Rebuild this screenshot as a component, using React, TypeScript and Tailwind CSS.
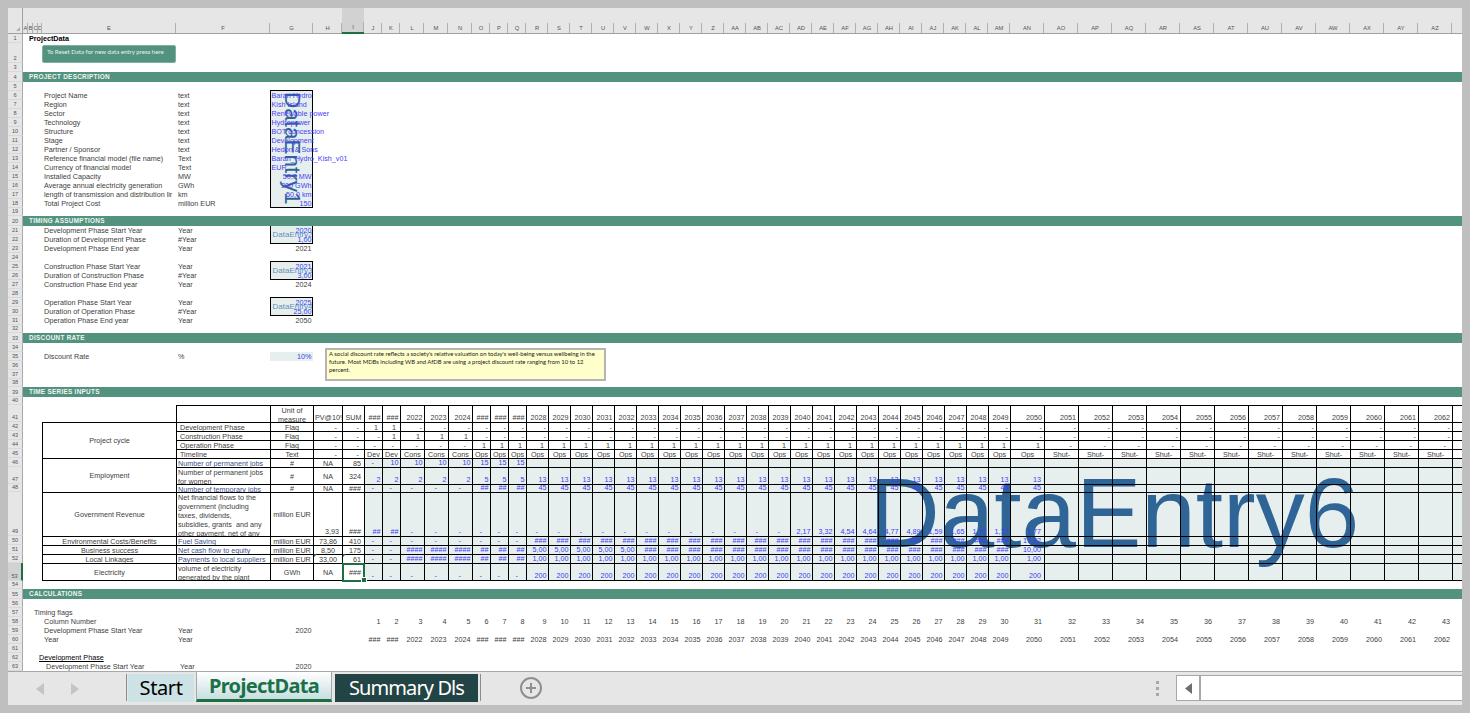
import React from "react"

const colWidths = [15, 5, 5, 5, 4, 134, 94, 43, 29, 22, 18, 18, 24, 24, 24, 18, 18, 18, ...Array(22).fill(22), ...Array(14).fill(34)]
const rowHeights = [
  26, 9, 20, 9, 10, 8.5, 9, 9, 9, 9, 9, 9, 9, 9, 9, 9, 9, 9, 9, 8.5, 10, 9, 9, 9, 9, 9, 9, 9, 9, 9, 9, 9, 8, 10, 9, 9, 9, 9, 8, 10, 8, 17, 9, 9, 9, 9, 9, 17, 8,
  44, 9, 9, 9, 18, 8, 10, 9, 9, 9, 9, 9, 9, 9, 9,
]
const colNames = ["A", "B", "C", "D", "E", "F", "G", "H", "I", "J", "K", "L", "M", "N", "O", "P", "Q", "R", "S", "T", "U", "V", "W", "X", "Y", "Z", "AA", "AB", "AC", "AD", "AE", "AF", "AG", "AH", "AI", "AJ", "AK", "AL", "AM", "AN", "AO", "AP", "AQ", "AR", "AS", "AT", "AU", "AV", "AW", "AX", "AY", "AZ", ""]

const ink = "text-[#404040]"
const blue = "text-[#3b3bf5]"

type CellProps = { c: number; r: number; cs?: number; rs?: number; className?: string; children?: React.ReactNode }

const Cell = ({ c, r, cs = 1, rs = 1, className = "", children }: CellProps) => (
  <div className={className} style={{ gridColumn: `${c + 1} / span ${cs}`, gridRow: `${r + 1} / span ${rs}` }}>
    {children}
  </div>
)

// plain text in a sheet cell, spills over its neighbours like excel does
const Txt = ({ c, r, x = 0, className = "", color = ink, children }: { c: number; r: number; x?: number; className?: string; color?: string; children: React.ReactNode }) => (
  <Cell c={c} r={r} className={`z-[2] whitespace-nowrap ${color} ${className}`}>
    <span style={{ marginLeft: x }}>{children}</span>
  </Cell>
)

const Num = ({ c, r, className = "", children }: { c: number; r: number; className?: string; children: React.ReactNode }) => (
  <Cell c={c} r={r} className={`z-[2] text-right whitespace-nowrap ${c >= 40 ? "pr-[2px]" : "pr-[1.5px]"} ${className}`}>
    {children}
  </Cell>
)

const Band = ({ r, title }: { r: number; title: string }) => (
  <Cell c={1} r={r} cs={53} className="z-[2] bg-[#52927f] pl-[6px] font-bold text-[6.4px] leading-[10px] tracking-[0.28px] text-[#eef5f2]">
    {title}
  </Cell>
)

const description = [
  ["Project Name", "text", "Baran Hydro"],
  ["Region", "text", "Kish Island"],
  ["Sector", "text", "Renewable power"],
  ["Technology", "text", "Hydropower"],
  ["Structure", "text", "BOT concession"],
  ["Stage", "text", "Development"],
  ["Partner / Sponsor", "text", "Hedon & Sons"],
  ["Reference financial model (file name)", "Text", "Baran_Hydro_Kish_v01"],
  ["Currency of financial model", "Text", "EUR"],
  ["Installed Capacity", "MW", "50,0 MW"],
  ["Average annual electricity generation", "GWh", "200 GWh"],
  ["length of transmission and distribution lir", "km", "50,0 km"],
  ["Total Project Cost", "million EUR", "150"],
]

const timing = [
  { r: 21, name: "Development", label: "DataEntry2", a: "2020", b: "1,00", end: "2021", endWord: "Development Phase End year" },
  { r: 25, name: "Construction", label: "DataEntry3", a: "2021", b: "3,00", end: "2024", endWord: "Construction Phase End year" },
  { r: 29, name: "Operation", label: "DataEntry4", a: "2025", b: "25,00", end: "2050", endWord: "Operation Phase End year" },
]

const yearLabel = (c: number) => (c === 10 || c === 11 || c === 15 || c === 16 || c === 17 ? "###" : String(2010 + c))

const govValues: Record<number, string> = { 30: "2,17", 31: "3,32", 32: "4,54", 33: "4,64", 34: "4,77", 35: "4,89", 36: "1,59", 37: "1,65", 38: "1,72", 39: "1,77", 40: "1,77" }

const blackRow = (r: number, c: number) => {
  if (r === 42) return c <= 11 ? "1" : "-"
  if (r === 43) return c >= 11 && c <= 14 ? "1" : "-"
  return c >= 15 && c <= 40 ? "1" : "-"
}
const timeline = (c: number) => (c <= 11 ? "Dev" : c <= 14 ? "Cons" : c <= 40 ? "Ops" : "Shut-")

const blueRow = (r: number, c: number) => {
  if (r === 46) return c === 10 ? "-" : c <= 14 ? "10" : c <= 17 ? "15" : ""
  if (r === 47) return c <= 14 ? "2" : c <= 17 ? "5" : c <= 40 ? "13" : ""
  if (r === 48) return c <= 14 ? "-" : c <= 17 ? "##" : c <= 40 ? "45" : ""
  if (r === 49) return c <= 11 ? "##" : c <= 29 ? "-" : govValues[c] ?? ""
  if (r === 50) return c <= 17 ? "-" : c <= 39 ? "###" : c === 40 ? "17,82" : ""
  if (r === 51) return c <= 11 ? "-" : c <= 14 ? "####" : c <= 17 ? "##" : c <= 22 ? "5,00" : c <= 39 ? "###" : c === 40 ? "10,00" : ""
  if (r === 52) return c <= 11 ? "-" : c <= 14 ? "####" : c <= 17 ? "##" : c <= 40 ? "1,00" : ""
  return c <= 17 ? "-" : c <= 40 ? "200" : ""
}

const tableLabels = [
  { r: 42, rs: 4, text: "Project cycle" },
  { r: 46, rs: 3, text: "Employment" },
  { r: 49, rs: 1, text: "Government Revenue" },
  { r: 50, rs: 1, text: "Environmental Costs/Benefits" },
  { r: 51, rs: 1, text: "Business success" },
  { r: 52, rs: 1, text: "Local Linkages" },
  { r: 53, rs: 1, text: "Electricity" },
]

const tableDesc: Record<number, [string, string, string, string]> = {
  42: ["Development Phase", "Flag", "-", "-"],
  43: ["Construction Phase", "Flag", "-", "-"],
  44: ["Operation Phase", "Flag", "-", "-"],
  45: ["Timeline", "Text", "-", "-"],
  46: ["Number of permanent jobs", "#", "NA", "85"],
  47: ["Number of permanent jobs\nfor women", "#", "NA", "324"],
  48: ["Number of temporary jobs", "#", "NA", "###"],
  49: ["Net financial flows to the\ngovernment (including\ntaxes, dividends,\nsubsidies, grants  and any\nother payment, net of any", "million EUR", "3,93", "###"],
  50: ["Fuel Saving", "million EUR", "73,86", "410"],
  51: ["Net cash flow to equity", "million EUR", "8,50", "175"],
  52: ["Payments to local suppliers", "million EUR", "33,00", "61"],
  53: ["volume of electricity\ngenerated by the plant", "GWh", "NA", "###"],
}

const line = "border-l border-t border-black"
const tableRows = [42, 43, 44, 45, 46, 47, 48, 49, 50, 51, 52, 53]
const seriesCols = Array.from({ length: 44 }, (_, i) => i + 10)

// padding of the flag rows: accounting format keeps ones and row 44 dashes further in
const flagPad = (r: number, v: string) => (v === "1" ? "pr-[4px]" : r === 44 ? "pr-[6px]" : "pr-[2px]")

const Sheet = () => (
  <div
    className="grid flex-1 min-h-0 overflow-hidden bg-white text-[7.2px] leading-[9px] font-['Liberation_Sans',Arial,sans-serif]"
    style={{ gridTemplateColumns: colWidths.map((w) => `${w}px`).join(" "), gridTemplateRows: rowHeights.map((h) => `${h}px`).join(" ") }}>
    {/* headers */}
    <Cell c={0} r={0} className="relative bg-[#e6e6e6] border-b border-r border-[#a0a0a0]">
      <div className="absolute right-[2px] bottom-[2px] h-0 w-0 border-l-[4px] border-l-transparent border-b-[4px] border-b-[#b0b0b0]" />
    </Cell>
    {colNames.map((name, i) => (
      <Cell
        key={i}
        c={i + 1}
        r={0}
        className={`relative flex items-end justify-center pb-[1px] text-[5.8px] leading-[8px] text-[#555] after:absolute after:right-0 after:bottom-0 after:h-[10px] after:w-px after:bg-[#b0b0b0] ${
          name === "I" ? "bg-[#d2d2d2] border-b-2 border-[#1d6f42]" : "bg-[#e6e6e6] border-b border-[#a0a0a0]"
        }`}>
        {name}
      </Cell>
    ))}
    {rowHeights.slice(1).map((_, i) => (
      <Cell
        key={i}
        c={0}
        r={i + 1}
        className={`flex items-end justify-center border-b border-[#d9d9d9] text-[5.6px] leading-[8px] text-[#555] ${
          i + 1 === 53 ? "bg-[#d2d2d2] border-r-2 border-r-[#1d6f42]" : "bg-[#e6e6e6] border-r border-r-[#a8a8a8]"
        }`}>
        {i + 1}
      </Cell>
    ))}

    <Txt c={1} r={1} x={6} color="text-black" className="font-bold">ProjectData</Txt>
    <Band r={4} title="PROJECT DESCRIPTION" />
    <Band r={20} title="TIMING ASSUMPTIONS" />
    <Band r={33} title="DISCOUNT RATE" />
    <Band r={39} title="TIME SERIES INPUTS" />
    <Band r={55} title="CALCULATIONS" />

    {/* project description */}
    <Cell c={7} r={6} rs={13} className="z-[1] mt-[-0.5px] border-[1.5px] border-black bg-[#e6efee]">
      <div className="flex h-full items-center justify-center pl-[9px] text-[22.5px] leading-none text-[#2f6497] [writing-mode:vertical-rl]">DataEntry1</div>
    </Cell>
    {description.map(([label, unit, value], i) => (
      <React.Fragment key={label}>
        <Txt c={5} r={6 + i} x={2}>{label}</Txt>
        <Txt c={6} r={6 + i} x={2}>{unit}</Txt>
        {i < 9 ? (
          <Txt c={7} r={6 + i} x={1.5} color="text-[#4a3df5]">{value}</Txt>
        ) : (
          <Num c={7} r={6 + i} className="text-[#4a3df5]">{value}</Num>
        )}
      </React.Fragment>
    ))}

    {/* timing */}
    {timing.map((t) => (
      <React.Fragment key={t.name}>
        <Cell c={7} r={t.r} rs={2} className="z-[1] mt-[-1px] flex items-center whitespace-nowrap border-[1.5px] border-black bg-[#e6efee] pl-[1.5px] text-[8px] text-[#5f8fb6]">
          {t.label}
        </Cell>
        <Txt c={5} r={t.r} x={2}>{t.name} Phase Start Year</Txt>
        <Txt c={6} r={t.r} x={2}>Year</Txt>
        <Num c={7} r={t.r} className={blue}>{t.a}</Num>
        <Txt c={5} r={t.r + 1} x={2}>Duration of {t.name} Phase</Txt>
        <Txt c={6} r={t.r + 1} x={2}>#Year</Txt>
        <Num c={7} r={t.r + 1} className={blue}>{t.b}</Num>
        <Txt c={5} r={t.r + 2} x={2}>{t.endWord}</Txt>
        <Txt c={6} r={t.r + 2} x={2}>Year</Txt>
        <Num c={7} r={t.r + 2} className={ink}>{t.end}</Num>
      </React.Fragment>
    ))}

    {/* discount */}
    <Txt c={5} r={35} x={2}>Discount Rate</Txt>
    <Txt c={6} r={35} x={2}>%</Txt>
    <Num c={7} r={35} className={`bg-[#e6efee] ${blue}`}>10%</Num>

    {/* time series table */}
    <Cell c={10} r={46} cs={44} rs={8} className="z-0 bg-[#e6efee]" />
    <Cell c={6} r={41} className={`z-[2] ${line}`} />
    <Cell c={7} r={41} className={`z-[2] overflow-hidden text-center ${line} ${ink}`}>
      Unit of
      <br />
      measure
    </Cell>
    <Cell c={8} r={41} className={`z-[2] flex items-end overflow-hidden whitespace-nowrap pl-[1px] ${line} ${ink}`}>PV@10%</Cell>
    <Cell c={9} r={41} className={`z-[2] flex items-end justify-center ${line} ${ink}`}>SUM</Cell>
    {seriesCols.map((c) => (
      <Cell key={c} c={c} r={41} className={`z-[2] flex items-end justify-end ${c >= 40 ? "pr-[2px]" : "pr-[1.5px]"} ${line} ${ink}`}>
        {c < 53 ? yearLabel(c) : ""}
      </Cell>
    ))}
    {tableLabels.map((l) => (
      <Cell key={l.r} c={5} r={l.r} rs={l.rs} className={`z-[2] flex items-center justify-center whitespace-nowrap ${line} ${ink} ${l.r === 53 ? "border-b" : ""}`}>
        {l.text}
      </Cell>
    ))}
    {tableRows.map((r) => {
      const [desc, unit, pv, sum] = tableDesc[r]
      const edge = r === 53 ? "border-b" : ""
      const tall = r === 47 || r === 49 || r === 53
      return (
        <React.Fragment key={r}>
          <Cell c={6} r={r} className={`z-[2] overflow-hidden whitespace-pre ${r <= 45 ? "pl-[3px]" : "pl-[1px]"} ${line} ${edge} ${r >= 46 && !tall ? "text-[#3c4f8c]" : ink}`}>
            {desc}
          </Cell>
          <Cell c={7} r={r} className={`z-[2] flex items-center justify-center whitespace-nowrap ${line} ${edge} ${ink}`}>{unit}</Cell>
          <Cell c={8} r={r} className={`z-[2] flex ${r === 49 ? "items-end justify-end pr-[3px]" : pv === "-" ? "justify-end pr-[5px]" : "items-center justify-center"} ${line} ${edge} ${ink}`}>{pv}</Cell>
          <Cell c={9} r={r} className={`z-[2] flex ${r === 49 ? "items-end justify-end pr-[3px]" : sum === "-" ? "justify-end pr-[5px]" : "items-center justify-end pr-[3px]"} ${line} ${edge} ${ink}`}>{sum}</Cell>
          {seriesCols.map((c) => {
            if (r <= 44) {
              const v = c < 53 ? blackRow(r, c) : ""
              return (
                <Cell key={c} c={c} r={r} className={`z-[2] text-right ${flagPad(r, v)} ${line} ${ink}`}>
                  {v}
                </Cell>
              )
            }
            if (r === 45) {
              return (
                <Cell key={c} c={c} r={r} className={`z-[2] text-center ${line} ${ink}`}>
                  {c < 53 ? timeline(c) : ""}
                </Cell>
              )
            }
            const v = c < 53 ? blueRow(r, c) : ""
            return (
              <Cell key={c} c={c} r={r} className={`z-[2] flex items-end ${v === "-" ? "justify-center" : "justify-end"} ${c >= 40 ? "pr-[3px]" : "pr-[1.5px]"} ${line} ${edge} ${blue}`}>
                {v}
              </Cell>
            )
          })}
        </React.Fragment>
      )
    })}

    {/* calculations */}
    <Txt c={5} r={57} x={-8}>Timing flags</Txt>
    <Txt c={5} r={58} x={2}>Column Number</Txt>
    <Txt c={5} r={59} x={2}>Development Phase Start Year</Txt>
    <Txt c={6} r={59} x={2}>Year</Txt>
    <Num c={7} r={59} className={ink}>2020</Num>
    <Txt c={5} r={60} x={2}>Year</Txt>
    <Txt c={6} r={60} x={2}>Year</Txt>
    {seriesCols.filter((c) => c < 53).map((c) => (
      <React.Fragment key={c}>
        <Num c={c} r={58} className={ink}>{c - 9}</Num>
        <Num c={c} r={60} className={ink}>{yearLabel(c)}</Num>
      </React.Fragment>
    ))}
    <Txt c={5} r={62} x={-3} color="text-black" className="underline">Development Phase</Txt>
    <Txt c={5} r={63} x={4}>Development Phase Start Year</Txt>
    <Txt c={6} r={63} x={4}>Year</Txt>
    <Num c={7} r={63} className={ink}>2020</Num>
  </div>
)

const Tabs = () => (
  <div className="flex h-[34px] shrink-0 border-t border-[#a8a8a8] bg-[#e6e6e6]">
    <div className="flex w-[118px] items-center gap-[27px] pl-[28px]">
      <svg width="8" height="12" viewBox="0 0 8 12"><path d="M8 0v12L0 6z" fill="#c4c4c4" /></svg>
      <svg width="8" height="12" viewBox="0 0 8 12"><path d="M0 0v12l8-6z" fill="#c4c4c4" /></svg>
    </div>
    <div className="mt-[2px] h-[27px] w-px bg-[#8c8c8c]" />
    <div className="ml-[1px] mt-[2px] flex h-[28px] w-[66px] items-center justify-center bg-[#cde2e5] text-[20px] tracking-[-0.4px] text-black font-['Noto_Sans',sans-serif]">
      Start
    </div>
    <div className="ml-[2px] flex h-[30px] w-[136px] items-center justify-center border-x border-b-[3px] border-x-[#a8a8a8] border-b-[#1d6f42] bg-gradient-to-b from-white to-[#c8dfe1] text-[20px] font-bold tracking-[-0.7px] text-[#1a7048] font-['Noto_Sans',sans-serif]">
      ProjectData
    </div>
    <div className="ml-[3px] mt-[2px] flex h-[28px] w-[143px] items-center justify-center bg-[#234444] text-[20px] tracking-[-0.9px] text-white font-['Noto_Sans',sans-serif]">
      Summary Dls
    </div>
    <div className="ml-[2px] mt-[2px] h-[27px] w-px bg-[#8c8c8c]" />
    <div className="ml-[39px] mt-[5px] flex h-[22px] w-[22px] items-center justify-center rounded-full border-2 border-[#8f8f8f]">
      <svg width="12" height="12" viewBox="0 0 12 12"><path d="M6 1v10M1 6h10" stroke="#8f8f8f" strokeWidth="2" /></svg>
    </div>
    <div className="ml-[614px] mt-[9px] flex h-[15px] w-[3px] flex-col justify-between">
      <span className="h-[3px] w-[3px] bg-[#a8a8a8]" />
      <span className="h-[3px] w-[3px] bg-[#a8a8a8]" />
      <span className="h-[3px] w-[3px] bg-[#a8a8a8]" />
    </div>
    <div className="ml-[17px] mt-[3px] flex h-[26px] flex-1 border border-r-0 border-[#a8a8a8] bg-white">
      <div className="flex w-[24px] items-center justify-center border-r-2 border-[#a8a8a8]">
        <svg width="7" height="11" viewBox="0 0 7 11"><path d="M7 0v11L0 5.5z" fill="#6e6e6e" /></svg>
      </div>
    </div>
  </div>
)

const App = () => (
  <div className="flex h-[713px] w-[1470px] flex-col overflow-hidden bg-[#bfbfbf] p-2">
    <div className="relative flex min-h-0 flex-1 flex-col">
      <Sheet />
      <div className="absolute left-[34px] top-[37px] z-[3] h-[18px] w-[134px] rounded-[2px] border border-[#7fb0a0] bg-[#52927f] pl-[4px] pt-[1px] text-[6.1px] leading-[10px] text-[#e8f2ee] font-['Lato',sans-serif]">
        To Reset Data for new data entry press here
      </div>
      <div className="absolute left-[317px] top-[340px] z-[3] h-[33px] w-[281px] border-2 border-[#b4b4b4] bg-[#ffffcc] pl-[2px] pr-[9px] text-[5.9px] leading-[8.2px] text-[#222] font-['Lato',sans-serif]">
        A social discount rate reflects a society's relative valuation on today's well-being versus wellbeing in the future. Most MDBs including WB and AfDB are using a project discount rate ranging from 10 to 12 percent.
      </div>
      <div className="absolute left-[861px] top-[456px] z-[1] whitespace-nowrap text-[98px] leading-none text-[#2f6497] font-['Liberation_Sans',Arial,sans-serif]">
        DataEntry6
      </div>
      {/* selected cell I53 */}
      <div className="absolute left-[334px] top-[555px] z-[3] h-[19px] w-[23px] border-2 border-[#1d6f42]" />
      <div className="absolute left-[353px] top-[569px] z-[3] h-[6px] w-[6px] border border-white bg-[#1d6f42]" />
      <div className="absolute left-[306px] top-[546px] z-[3] h-0 w-0 border-r-[3px] border-t-[3px] border-r-transparent border-t-[#1d6f42]" />
      <div className="absolute left-[335px] top-[546px] z-[3] h-0 w-0 border-r-[3px] border-t-[3px] border-r-transparent border-t-[#1d6f42]" />
      <Tabs />
    </div>
  </div>
)

export default App
